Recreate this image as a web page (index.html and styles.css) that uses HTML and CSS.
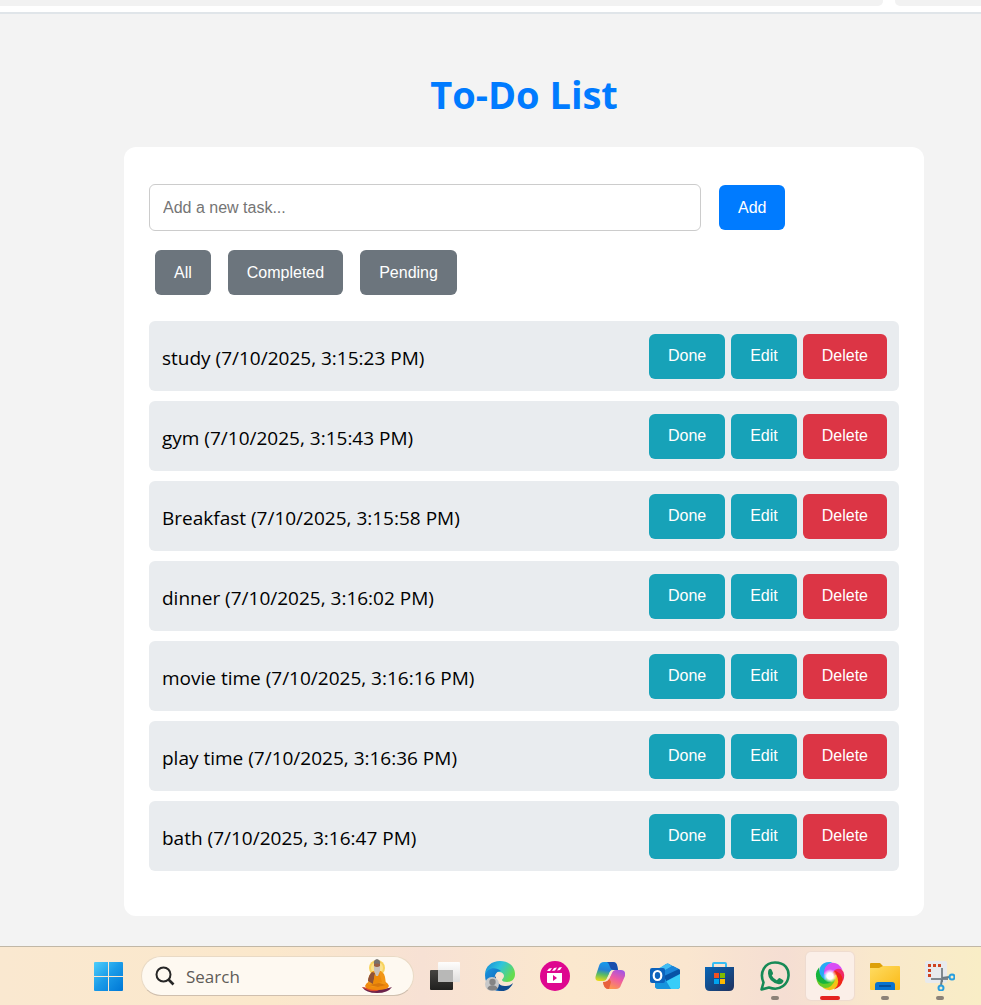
FILE: index.html
```html
<!DOCTYPE html>
<html lang="en">
<head>
<meta charset="utf-8">
<meta name="viewport" content="width=device-width, initial-scale=1">
<title>To-Do List</title>
<link rel="stylesheet" href="styles.css">
</head>
<body>
<header class="tabs"><span class="tab tab-wide"></span><span class="tab tab-rest"></span></header>
<main class="page">
  <h1 class="title">To-Do List</h1>
  <section class="card">
    <form class="add-row">
      <input class="task-input" type="text" placeholder="Add a new task..." aria-label="New task">
      <button class="btn btn-add" type="button">Add</button>
    </form>
    <div class="filters">
      <button class="btn btn-filter" type="button">All</button>
      <button class="btn btn-filter" type="button">Completed</button>
      <button class="btn btn-filter" type="button">Pending</button>
    </div>
    <ul class="tasks">
      <li class="task"><span class="task-text">study (7/10/2025, 3:15:23 PM)</span><div class="actions"><button class="btn btn-info" type="button">Done</button><button class="btn btn-info" type="button">Edit</button><button class="btn btn-danger" type="button">Delete</button></div></li>
      <li class="task"><span class="task-text">gym (7/10/2025, 3:15:43 PM)</span><div class="actions"><button class="btn btn-info" type="button">Done</button><button class="btn btn-info" type="button">Edit</button><button class="btn btn-danger" type="button">Delete</button></div></li>
      <li class="task"><span class="task-text">Breakfast (7/10/2025, 3:15:58 PM)</span><div class="actions"><button class="btn btn-info" type="button">Done</button><button class="btn btn-info" type="button">Edit</button><button class="btn btn-danger" type="button">Delete</button></div></li>
      <li class="task"><span class="task-text">dinner (7/10/2025, 3:16:02 PM)</span><div class="actions"><button class="btn btn-info" type="button">Done</button><button class="btn btn-info" type="button">Edit</button><button class="btn btn-danger" type="button">Delete</button></div></li>
      <li class="task"><span class="task-text">movie time (7/10/2025, 3:16:16 PM)</span><div class="actions"><button class="btn btn-info" type="button">Done</button><button class="btn btn-info" type="button">Edit</button><button class="btn btn-danger" type="button">Delete</button></div></li>
      <li class="task"><span class="task-text">play time (7/10/2025, 3:16:36 PM)</span><div class="actions"><button class="btn btn-info" type="button">Done</button><button class="btn btn-info" type="button">Edit</button><button class="btn btn-danger" type="button">Delete</button></div></li>
      <li class="task"><span class="task-text">bath (7/10/2025, 3:16:47 PM)</span><div class="actions"><button class="btn btn-info" type="button">Done</button><button class="btn btn-info" type="button">Edit</button><button class="btn btn-danger" type="button">Delete</button></div></li>
    </ul>
  </section>
</main>
<footer class="taskbar">
  <button class="start" type="button" aria-label="Start">
    <svg width="30" height="30" viewBox="0 0 30 30"><defs><linearGradient id="win" x1="0" y1="0" x2="29" y2="29" gradientUnits="userSpaceOnUse"><stop offset="0" stop-color="#4fd0fc"/><stop offset=".5" stop-color="#1a9be8"/><stop offset="1" stop-color="#0078d6"/></linearGradient></defs><path fill="url(#win)" d="M1 1h13v14H0V2q0-1 1-1zM15 1h13q1 0 1 1v13H15zM0 16h14v14H1q-1 0-1-1zM15 16h14v13q0 1-1 1H15z"/></svg>
  </button>
  <label class="search">
    <svg width="20" height="20" viewBox="0 0 20 20" fill="none" stroke="#262626" stroke-width="2"><circle cx="8.500" cy="8.500" r="7"/><path d="M13.500 13.500l5 5" stroke-width="2.600"/></svg>
    <input class="search-input" type="text" placeholder="Search" aria-label="Search">
    <svg width="32" height="34" viewBox="0 0 32 34"><circle cx="16" cy="9" r="8" fill="#f8d35e"/><circle cx="16" cy="9" r="6" fill="#fbe28e"/><path d="M1 28q6 2 15 2t15-2q-4 6-15 6T1 28z" fill="#6b234b"/><path d="M1 28q6 1 9 1l6 1 6-1-6 3q-9 1-15-4z" fill="#dc4a2c"/><path d="M4 27q2-5 8-5h8q6 0 8 5-1 4-12 4T4 27z" fill="#f18a0d"/><path d="M12 12h8q3 2 4 6l1 7-6 3h-8l-4-3 1-8q1-3 4-5z" fill="#f29616"/><path d="M11 13q-4 4-4 9l5 3 2-11z" fill="#8e5237"/><path d="M12 25l2-10 4-2 3 10z" fill="#ee8b08"/><path d="M13 4q3-2 6 0v6q-3 3-6 0z" fill="#9b6044"/><path d="M13 7q3 2 6 0v5l-2 5h-2l-2-5z" fill="#c9c2ba"/><path d="M13 5q-1-4 3-5 4 1 3 5-3-1-6 0z" fill="#77726e"/><path d="M8 26l10-2 7 2-8 2z" fill="#d9770b"/></svg>
  </label>
  <nav class="apps">
    <button class="app" type="button" aria-label="Task view"><svg class="icon" viewBox="0 0 30 30"><defs><linearGradient id="tv" x2="0" y2="1"><stop stop-color="#454441"/><stop offset="1" stop-color="#20201f"/></linearGradient><linearGradient id="tv2" x2="0" y2="1"><stop stop-color="#fff"/><stop offset="1" stop-color="#dedede"/></linearGradient></defs><rect y="9" width="23" height="20" rx="1" fill="url(#tv)"/><rect x="8" y="1" width="22" height="20" rx="1" fill="url(#tv2)" opacity=".94"/><path d="M8 9h15v12H9q-1 0-1-1z" fill="#b8b8b7"/></svg><span class="dot none"></span></button>
    <button class="app" type="button" aria-label="Edge"><svg class="icon" viewBox="0 0 30 30"><defs><linearGradient id="eg" x1="0" x2="1" y2=".5"><stop stop-color="#1685d6"/><stop offset=".5" stop-color="#2fc4dd"/><stop offset="1" stop-color="#66dc4d"/></linearGradient><linearGradient id="eb" x2="1" y2="1"><stop stop-color="#1b94e0"/><stop offset="1" stop-color="#0b55a6"/></linearGradient></defs><path d="M0 14C0 5 7 0 15 0c9 0 15 6 15 13 0 6-4 8-8 8-3 0-5-1-5-2 0-1 2-2 2-4 0-2-2-4-5-4-7-1-13 0-14 4z" fill="url(#eg)"/><path d="M0 14c2-7 10-9 16-4-5 0-7 5-6 9 1 6 6 10 12 9-9 5-22 0-22-14z" fill="url(#eb)"/><path d="M11 15c-1 4 3 11 10 10 3 0 5-1 7-3-2 5-6 8-12 8-7-2-9-10-5-15z" fill="#104c8e"/><circle cx="7" cy="23" r="7" fill="#c7c8c9"/><circle cx="7.500" cy="21" r="3.200" fill="#848484"/><path d="M2.500 28c0-5 10-5 10 0q-5 3-10 0z" fill="#848484"/></svg><span class="dot none"></span></button>
    <button class="app" type="button" aria-label="Video editor"><svg class="icon" viewBox="0 0 30 30"><circle cx="15" cy="15" r="15" fill="#de078f"/><path d="M7 12h15v9q0 1-1 1H8q-1 0-1-1z" fill="#fff"/><path d="M7 10l2-2.500 3-.5-2 3zm5 0l2-3 3-.5-2 3zm5-.5l2-3 3-.5-2 3z" fill="#fff"/><path d="M13 14l4 3-4 3z" fill="#de078f"/></svg><span class="dot none"></span></button>
    <button class="app" type="button" aria-label="Copilot"><svg class="icon" viewBox="0 0 30 30"><defs><linearGradient id="c1" x1=".4" x2=".2" y2="1"><stop stop-color="#179bec"/><stop offset=".4" stop-color="#2581d6"/><stop offset=".65" stop-color="#58ba66"/><stop offset="1" stop-color="#eadc16"/></linearGradient><linearGradient id="c2" x1=".8" x2=".3" y2="1"><stop stop-color="#a154e5"/><stop offset=".45" stop-color="#ee5ca2"/><stop offset="1" stop-color="#ff9c46"/></linearGradient></defs><path d="M9 1h9q3 0 4 3l1 5h-5q-3 0-4 4l-2 4q-1 3-4 3H4q-5 0-3-6l3-9q1-4 5-4z" fill="url(#c1)"/><path d="M14 1h4q3 0 4 3l1 5h-4q-3 0-4-3-1-4-3-5z" fill="#194fad"/><path d="M21 9h5q5 0 4 6l-4 9q-1 4-5 4h-8q-4 0-5-7h2q3 0 4-3l3-6q1-3 4-3z" fill="url(#c2)"/><path d="M8 21q3 0 4-1l2-3 2 4-2 7h-1q-4 0-5-7z" fill="#e8613c"/><path d="M15 11q1-2 4-2-2 1-3 4l-2 5q-1 2-3 2 1-1 2-4z" fill="#fbe8ce"/></svg><span class="dot none"></span></button>
    <button class="app" type="button" aria-label="Outlook"><svg class="icon" viewBox="0 0 30 30"><path d="M5 11L16 3q2-1 3 0l11 6v16q0 3-3 3H9q-4 0-4-3z" fill="#127ed2"/><path d="M6 9l10-6q2-1 3 0l3 2-12 8z" fill="#41bdf3"/><path d="M13 10l10-5 6 3q1 1 1 4l-15 8z" fill="#1b86da"/><path d="M14 15l15-7q2 2 1 5l-14 7z" fill="#0853a6"/><path d="M30 13v12q0 3-3 3H9l6-7z" fill="#38cdf8"/><path d="M5 20l10-2 6 10H9q-4 0-4-3z" fill="#1694dd"/><rect y="7" width="15" height="15" rx="2" fill="#0c63bd"/><ellipse cx="7.500" cy="14.500" rx="3.800" ry="4.500" fill="none" stroke="#fff" stroke-width="2.200"/></svg><span class="dot none"></span></button>
    <button class="app" type="button" aria-label="Store"><svg class="icon" viewBox="0 0 30 30"><defs><linearGradient id="st" x2="1" y2="1"><stop stop-color="#0865b6"/><stop offset="1" stop-color="#20315d"/></linearGradient></defs><path d="M0 6h29v19q0 5-5 5H5q-5 0-5-5z" fill="url(#st)"/><path d="M8 6V3q0-1 1-1h11q1 0 1 1v3" fill="none" stroke="#35bdf4" stroke-width="2"/><path d="M9 12h5v5H9z" fill="#f25022"/><path d="M15 12h5v5h-5z" fill="#7fba00"/><path d="M9 18h5v5H9z" fill="#00a4ef"/><path d="M15 18h5v5h-5z" fill="#ffb900"/></svg><span class="dot none"></span></button>
    <button class="app" type="button" aria-label="WhatsApp"><svg class="icon" viewBox="0 0 30 30"><path d="M1.500 28.500l2-7C-1 11 5 1.500 15 1.500S29 8 28.500 15 21 31 9 26.500z" fill="none" stroke="#168a56" stroke-width="2.600" stroke-linejoin="round"/><path d="M8.500 9q1.500-2 3-.5l1.500 3.500q.3 1-1.200 2.500 1.800 3.500 5 4.800l2-2q.7-.4 1.200 0l3 1.700q.8.6.2 2-1.500 2.500-4.500 2.200Q8.500 21 8 12.500q0-2.300.5-3.500z" fill="#168a56"/></svg><span class="dot"></span></button>
    <button class="app app-active" type="button" aria-label="Browser"><svg class="icon" viewBox="0 0 30 30"><defs><radialGradient id="core"><stop offset=".45" stop-color="#fff"/><stop offset="1" stop-color="#fff" stop-opacity="0"/></radialGradient><filter id="soft"><feGaussianBlur stdDeviation=".5"/></filter><path id="petal" d="M9 13Q10 3 18 2q7 0 10 8-6-4-10 2z"/></defs><g filter="url(#soft)"><use href="#petal" fill="#f02c68" transform="rotate(45 15 15)"/><use href="#petal" fill="#ef2517" transform="rotate(95 15 15)"/><use href="#petal" fill="#f4c315" transform="rotate(145 15 15)"/><use href="#petal" fill="#6acb27" transform="rotate(195 15 15)"/><use href="#petal" fill="#18b43c" transform="rotate(240 15 15)"/><use href="#petal" fill="#27a9f5" transform="rotate(300 15 15)"/><use href="#petal" fill="#d84df5" transform="rotate(355 15 15)"/></g><circle cx="15" cy="15" r="7" fill="url(#core)"/></svg><span class="dot dot-active"></span></button>
    <button class="app" type="button" aria-label="File Explorer"><svg class="icon" viewBox="0 0 30 30"><defs><linearGradient id="fo" x2="1" y2="1"><stop stop-color="#ffdc62"/><stop offset="1" stop-color="#fab916"/></linearGradient></defs><path d="M0 3q0-1 1-1h9l3 3h16v5H0z" fill="#dda008"/><path d="M0 7h9l4-2h16q1 0 1 1v22q0 1-1 1H1q-1 0-1-1z" fill="url(#fo)"/><path d="M5 29v-5q0-3 3-3h14q3 0 3 3v5z" fill="#0873cf"/><path d="M9 25h12" stroke="#05509a" stroke-width="2"/></svg><span class="dot"></span></button>
    <button class="app" type="button" aria-label="Snipping Tool"><svg class="icon" viewBox="0 0 30 30"><rect width="22" height="22" rx="2" fill="#e8eaed"/><path d="M3 3h3v3H3zm5 0h3v3H8zm5 0h3v3h-3zM3 8h3v3H3zm0 5h3v3H3z" fill="#ce4220"/><path d="M17 7v14M6 18h17" stroke="#818990" stroke-width="2"/><path d="M17 17l7-1M17 18l-1 6" stroke="#6e7b84" stroke-width="2"/><circle cx="27" cy="16" r="2.500" fill="none" stroke="#299fdf" stroke-width="2"/><circle cx="16" cy="27" r="2.500" fill="none" stroke="#299fdf" stroke-width="2"/></svg><span class="dot"></span></button>
  </nav>
</footer>
</body>
</html>
```
FILE: styles.css
```css
* { box-sizing: border-box; }
body {
  margin: 0;
  min-height: 100vh;
  display: flex;
  flex-direction: column;
  background: #f3f3f3;
  font-family: "Open Sans", sans-serif;
  color: #000;
}
button, input { font-family: "Liberation Sans", Arial, sans-serif; font-size: 16px; }
button { border: 0; }
.tabs {
  display: flex;
  gap: 12px;
  height: 14px;
  background: #fff;
  border-bottom: 2px solid #e0e5e9;
}
.tab { height: 6px; background: #f2f2f2; }
.tab-wide { flex: 0 0 90%; border-radius: 0 0 5px 0; }
.tab-rest { flex: 1; border-radius: 0 0 0 5px; }
.page { flex: 1; padding: 53px 0 30px 67px; }
.title {
  margin: 0 0 26px;
  font-size: 38px;
  line-height: 54px;
  text-align: center;
  color: #007bff;
}
.card {
  max-width: 800px;
  margin: 0 auto;
  padding: 37px 25px 45px;
  background: #fff;
  border-radius: 12px;
}
.add-row { display: flex; align-items: center; gap: 18px; margin: 0; }
.task-input {
  width: 552px;
  height: 47px;
  padding: 0 13px;
  border: 1px solid #ccc;
  border-radius: 6px;
  background: #fff;
}
.task-input::placeholder { color: #757575; }
.btn {
  height: 45px;
  padding: 0 19px;
  border-radius: 6px;
  color: #fff;
  line-height: 20px;
}
.btn-add { background: #007bff; }
.btn-filter { background: #6c757d; }
.btn-info { background: #17a2b8; }
.btn-danger { background: #dc3545; }
.filters { display: flex; gap: 17px; margin: 19px 0 26px; padding-left: 6px; }
.tasks { display: grid; gap: 10px; margin: 0; padding: 0; list-style: none; }
.task {
  display: flex;
  align-items: center;
  justify-content: space-between;
  min-height: 70px;
  padding: 12px 12px 12px 13px;
  background: #e9ecef;
  border-radius: 6px;
}
.task-text { padding-top: 3px; font-size: 19px; line-height: 26px; }
.actions { display: flex; gap: 6px; }
.taskbar {
  display: flex;
  align-items: center;
  height: 59px;
  padding: 0 13px 0 94px;
  border-top: 1px solid #c1b7a6;
  background: linear-gradient(90deg, #fae8d0, #fbe8cb 28%, #f7e1d4 43%, #fbe8ce 58%, #fae6cf 70%, #f5ded3 80%, #f9e8cc 89%, #f9edc6);
}
.start { flex: none; width: 30px; height: 30px; padding: 0; margin-right: 17px; background: none; }
.start svg { display: block; }
.search {
  flex: 0 0 273px;
  min-width: 0;
  display: flex;
  align-items: center;
  height: 40px;
  padding: 0 20px 0 13px;
  border: 1px solid #e9dac5;
  border-bottom-color: #cfbfae;
  border-radius: 20px;
  background: #fef9f1;
}
.search svg { flex: none; }
.search-input {
  flex: 1;
  width: 0;
  min-width: 0;
  padding: 0 0 0 11px;
  border: 0;
  background: none;
  font-family: "Open Sans", sans-serif;
  font-size: 17px;
}
.search-input::placeholder { color: #5f5c58; }
.apps { display: flex; gap: 7px; margin-left: 7px; }
.app {
  flex: none;
  display: flex;
  flex-direction: column;
  align-items: center;
  gap: 5px;
  width: 48px;
  height: 48px;
  padding: 9px 0 0;
  border-radius: 5px;
  background: none;
}
.app-active { background: #fbefe8; box-shadow: 0 0 1px 1px #eedbd0; }
.icon { flex: none; width: 30px; height: 30px; }
.dot { width: 8px; height: 4px; border-radius: 2px; background: #8c8278; }
.dot-active { width: 20px; background: #e42320; }
.none { visibility: hidden; }
```
